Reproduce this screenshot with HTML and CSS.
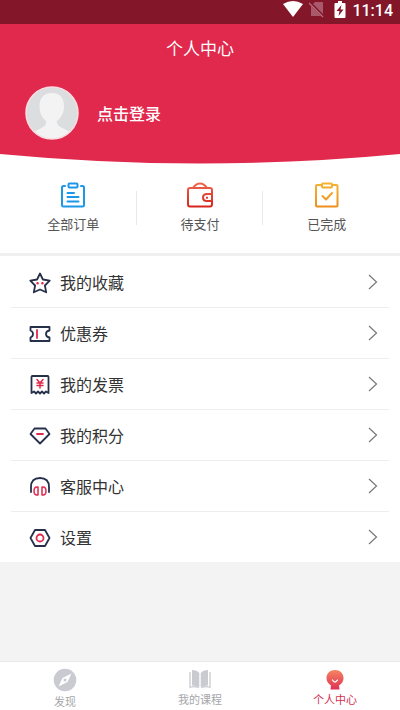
FILE: index.html
```html
<!DOCTYPE html>
<html lang="zh-CN">
<head>
<meta charset="utf-8">
<meta name="viewport" content="width=device-width, initial-scale=1">
<title>个人中心</title>
<link rel="stylesheet" href="styles.css">
</head>
<body>
<div class="app">
  <div class="status">
    <svg width="20" height="18" viewBox="0 0 20 18" fill="#fff"><path d="M0 4Q10-2 20 4L10 17Z"/></svg>
    <svg width="16" height="18" viewBox="0 0 16 18"><path d="M6 2H14V16H2V6Z" fill="#a8596b"/><path d="M0 2L15 17" stroke="#84162a" stroke-width="3"/><path d="M0 3L14 17" stroke="#b66e7d" stroke-width="1.3"/></svg>
    <svg width="12" height="18" viewBox="0 0 12 18"><path d="M4 1H8V3H10.500Q11.500 3 11.500 4V17Q11.500 18 10.500 18H1.500Q.5 18 .5 17V4Q.5 3 1.500 3H4Z" fill="#fff"/><path d="M7.500 5L2.500 11H5.500L4.500 16L9.500 9.500H6.500Z" fill="#84162a"/></svg>
    <span class="clock">11:14</span>
  </div>
  <header class="hero">
    <h1 class="title">个人中心</h1>
    <a class="login" href="#login">
      <svg class="avatar" viewBox="0 0 54 54"><defs><clipPath id="face"><circle cx="27" cy="27" r="26"/></clipPath></defs><circle cx="27" cy="27" r="26" fill="#dcdddf"/><path clip-path="url(#face)" fill="#f3f3f3" d="M27 7C18 7 14.500 13 14.500 20C14.500 27 17 32 21 35C22 40 17 42 8 46V54H46V46C37 42 31 40 32 35C36 32 39 27 39 20C39 13 36 7 27 7Z"/><circle cx="27" cy="27" r="26" fill="none" stroke="#fbdce2" stroke-width="1.500"/></svg>
      <span>点击登录</span>
    </a>
  </header>
  <svg class="curve" viewBox="0 0 400 10" preserveAspectRatio="none"><path d="M0-1H400V0Q200 19 0 0Z" fill="#e0294c"/></svg>
  <nav class="orders" aria-label="订单">
    <a href="#all">
      <svg width="26" height="26" viewBox="0 0 26 26" fill="none" stroke="#1d98e9" stroke-width="2" stroke-linecap="round" stroke-linejoin="round"><path d="M5 4H3.500Q2 4 2 5.500V23Q2 24.500 3.500 24.500H22.500Q24 24.500 24 23V5.500Q24 4 22.500 4H21"/><rect x="8.500" y="1.500" width="9" height="4" rx="1"/><path d="M7.500 11H14M7.500 15H18.500M7.500 19.500H18.500"/></svg>
      <span>全部订单</span>
    </a>
    <a href="#pending">
      <svg width="26" height="26" viewBox="0 0 26 26" fill="none" stroke="url(#red)" stroke-width="2" stroke-linecap="round" stroke-linejoin="round"><defs><linearGradient id="red" gradientUnits="userSpaceOnUse" x1="0" y1="0" x2="0" y2="26"><stop stop-color="#ef6a4e"/><stop offset="1" stop-color="#d5201b"/></linearGradient></defs><path d="M6 6Q9 1.500 13 1.500T20 6"/><path d="M25 12V8Q25 6 23 6H3Q1 6 1 8V22Q1 24.500 3 24.500H23Q25 24.500 25 22V19"/><path d="M25 12H20Q16 12 16 15.500T20 19H25M20 15.500V16M25 12V19"/></svg>
      <span>待支付</span>
    </a>
    <a href="#done">
      <svg width="26" height="26" viewBox="0 0 26 26" fill="none" stroke="url(#gold)" stroke-width="2" stroke-linecap="round" stroke-linejoin="round"><defs><linearGradient id="gold" gradientUnits="userSpaceOnUse" x1="0" y1="0" x2="0" y2="26"><stop stop-color="#f5b52f"/><stop offset="1" stop-color="#ec8d1d"/></linearGradient></defs><path d="M8 3H3Q2 3 2 4V23.500Q2 24.500 3 24.500H22.500Q23.500 24.500 23.500 23.500V4Q23.500 3 22.500 3H18"/><rect x="8" y="1.500" width="10" height="4" rx="1"/><path d="M8.500 14L12 17.500L18 11"/></svg>
      <span>已完成</span>
    </a>
  </nav>
  <ul class="menu">
    <li><a href="#favorites">
      <svg class="icon" viewBox="0 0 22 22"><path d="M11 1.500L13.900 7.500L20.700 8.600L15.900 13.500L17.200 20.300L11 17.500L4.800 20.300L6.100 13.500L1.300 8.600L8.100 7.500Z"/><path class="dots" d="M8.500 11.200H8.600M13.400 11.200H13.500"/></svg>
      <span>我的收藏</span><svg class="chevron" viewBox="0 0 10 16"><path d="M1 1L8.500 8L1 15"/></svg></a></li>
    <li><a href="#coupons">
      <svg class="icon" viewBox="0 0 22 22"><path d="M1.500 4H20.500V7.500Q17 8 17 11T20.500 14.500V18H1.500V14.500Q4 13.500 4 11T1.500 7.500Z"/><path class="accent" d="M8 7V15"/></svg>
      <span>优惠券</span><svg class="chevron" viewBox="0 0 10 16"><path d="M1 1L8.500 8L1 15"/></svg></a></li>
    <li><a href="#invoices">
      <svg class="icon" viewBox="0 0 22 22"><path d="M2.500 19V3Q2.500 2 3.500 2H18.500Q19.500 2 19.500 3V19L17 17.500L15 19.500L13 17.500L11 19.500L9 17.500L7 19.500L5 17.500Z"/><path class="accent thin" d="M8 5.500L11 9L14 5.500M8 9H14M8 11.500H14M11 9V14"/></svg>
      <span>我的发票</span><svg class="chevron" viewBox="0 0 10 16"><path d="M1 1L8.500 8L1 15"/></svg></a></li>
    <li><a href="#points">
      <svg class="icon" viewBox="0 0 22 22"><path d="M5.500 3.500H16.500L20.500 9L11 18.500L1.500 9Z"/><path class="accent" d="M8 9H14"/></svg>
      <span>我的积分</span><svg class="chevron" viewBox="0 0 10 16"><path d="M1 1L8.500 8L1 15"/></svg></a></li>
    <li><a href="#service">
      <svg class="icon" viewBox="0 0 22 22"><path d="M2 16V11Q2 2 11 2T20 11V16"/><path class="accent thin" d="M9 11V19H8Q5 19 5 15T8 11ZM13 11V19H14Q17 19 17 15T14 11Z"/></svg>
      <span>客服中心</span><svg class="chevron" viewBox="0 0 10 16"><path d="M1 1L8.500 8L1 15"/></svg></a></li>
    <li><a href="#settings">
      <svg class="icon" viewBox="0 0 22 22"><path d="M6 3H16L20.500 11L16 19H6L1.500 11Z"/><circle class="accent" cx="11" cy="11" r="3.500"/></svg>
      <span>设置</span><svg class="chevron" viewBox="0 0 10 16"><path d="M1 1L8.500 8L1 15"/></svg></a></li>
  </ul>
  <nav class="tabs" aria-label="主导航">
    <a href="#discover">
      <svg width="24" height="24" viewBox="0 0 24 24"><circle cx="12" cy="12" r="11.300" fill="#c9cbd1"/><path d="M18.500 5.500L14.500 14L5.500 18.500L9.500 10Z" fill="#fff"/><circle cx="12" cy="12" r="1.500" fill="#c9cbd1"/></svg>
      <span>发现</span>
    </a>
    <a href="#courses">
      <svg width="24" height="22" viewBox="0 0 24 22"><path d="M4 2Q9 2 11.300 5V20Q9 17.500 4 17.500ZM20 2Q15 2 12.700 5V20Q15 17.500 20 17.500Z" fill="#c9cbd1"/><path d="M2 4V19.200Q7 18 10 19.800M22 4V19.200Q17 18 14 19.800" fill="none" stroke="#c9cbd1" stroke-width="1.300"/></svg>
      <span>我的课程</span>
    </a>
    <a class="active" href="#me" aria-current="page">
      <svg width="24" height="22" viewBox="0 0 24 22"><defs><linearGradient id="me" x1="0" y1="0" x2="0" y2="1"><stop stop-color="#f58462"/><stop offset="1" stop-color="#df3152"/></linearGradient></defs><path d="M12 2C7 2 3.500 5.500 3.500 10Q3.500 15 8 17.500L7.500 21.500H16.500L16 17.500Q20.500 15 20.500 10C20.500 5.500 17 2 12 2Z" fill="url(#me)"/><path d="M9.500 12Q12 16 14.500 12" fill="none" stroke="#fff" stroke-width="1.300" stroke-linecap="round"/></svg>
      <span>个人中心</span>
    </a>
  </nav>
</div>
</body>
</html>
```
FILE: styles.css
```css
* { box-sizing: border-box; }

body {
  margin: 0;
  background: #f3f3f3;
  color: #333;
  font-family: Roboto, "Noto Sans CJK SC", sans-serif;
}

a { color: inherit; text-decoration: none; }
svg { display: block; flex: none; }

.app {
  display: flex;
  flex-direction: column;
  min-height: 100vh;
}

.status {
  display: flex;
  justify-content: flex-end;
  align-items: flex-start;
  height: 24px;
  padding: 0 7px 0 0;
  background: #84162a;
  color: #fff;
}
.status svg + svg { margin-left: 6px; }
.status svg:nth-child(3) { margin-left: 9px; }
.clock {
  margin-left: 6px;
  font-size: 16px;
  font-weight: 500;
  line-height: 21px;
}

.hero {
  padding-bottom: 14px;
  background: #e0294c;
  color: #fff;
}
.title {
  margin: 0;
  font-size: 17px;
  font-weight: 400;
  line-height: 50px;
  text-align: center;
}
.login {
  display: flex;
  align-items: center;
  gap: 18px;
  padding: 12px 25px 0;
  font-size: 16px;
  font-weight: 500;
}
.avatar { width: 54px; height: 54px; }
.curve {
  width: 100%;
  height: 10px;
  background: #fff;
}

.orders {
  display: grid;
  grid-template-columns: repeat(3, 1fr);
  padding: 18px 10px 18px;
  background: #fff;
  border-bottom: 3px solid #f0f0f0;
  color: #555;
  font-size: 13px;
  line-height: 20px;
}
.orders a {
  display: flex;
  flex-direction: column;
  align-items: center;
  gap: 7px;
  background: linear-gradient(#e8e8e8, #e8e8e8) right 9px / 1px 34px no-repeat;
}
.orders a:last-child { background: none; }

.menu {
  margin: 0;
  padding: 0 11px;
  background: #fff;
  list-style: none;
}
.menu li + li { border-top: 1px solid #eee; }
.menu a {
  display: flex;
  align-items: center;
  height: 50px;
  padding: 0 11px 0 18px;
  font-size: 16px;
}
.menu li:first-child a { height: 51px; }
.menu span { flex: 1; margin-left: 9px; }
.icon {
  width: 22px;
  height: 22px;
  margin-top: 2px;
  fill: none;
  stroke: #26304b;
  stroke-width: 1.800;
  stroke-linecap: round;
  stroke-linejoin: round;
}
.icon .accent { stroke: #e0294c; }
.icon .thin { stroke-width: 1.500; }
.icon .dots { stroke: #e0294c; stroke-width: 2.500; }
.chevron {
  width: 10px;
  height: 16px;
  fill: none;
  stroke: #777;
  stroke-width: 1.200;
}

.tabs {
  display: grid;
  grid-template-columns: 13fr 14fr 13fr;
  margin-top: auto;
  padding-top: 6px;
  border-top: 1px solid #e9e9e9;
  background: #fff;
  color: #a5a6aa;
  font-size: 11px;
  line-height: 14px;
}
.tabs a {
  display: flex;
  flex-direction: column;
  align-items: center;
  gap: 4px;
}
.tabs .active { color: #d42f51; }
```
